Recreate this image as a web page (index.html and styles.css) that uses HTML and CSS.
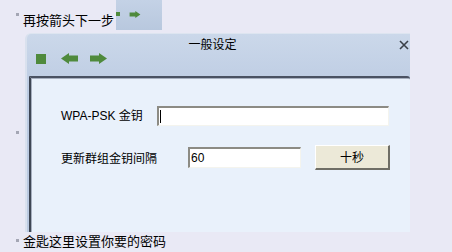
FILE: index.html
```html
<!DOCTYPE html>
<html lang="zh">
<head>
<meta charset="utf-8">
<link rel="stylesheet" href="styles.css">
</head>
<body>
<ul class="steps">
  <li class="step step-top">
    <span class="dot"></span>
    <span class="step-text">再按箭头下一步</span>
    <div class="strip">
      <span class="strip-square"></span>
      <svg class="strip-arrow" width="12" height="7" viewBox="0 0 17 11"><polygon points="17,5.5 9,0 9,2.5 0,2.5 0,8.5 9,8.5 9,11" fill="#4f8a3c"/></svg>
    </div>
  </li>
  <li class="step step-dialog">
    <span class="dot"></span>
    <div class="dialog">
      <div class="titlebar">
        <div class="title-row">
          <span class="title">一般设定</span>
          <svg class="close" width="10" height="10" viewBox="0 0 10 10"><path d="M1 1 L9 9 M9 1 L1 9" stroke="#3a4048" stroke-width="1.6"/></svg>
        </div>
        <div class="toolbar">
          <span class="tb-square"></span>
          <svg class="tb-arrow" width="17" height="11" viewBox="0 0 17 11"><polygon points="0,5.5 8,0 8,2.5 17,2.5 17,8.5 8,8.5 8,11" fill="#4f8a3c"/></svg>
          <svg class="tb-arrow" width="17" height="11" viewBox="0 0 17 11"><polygon points="17,5.5 9,0 9,2.5 0,2.5 0,8.5 9,8.5 9,11" fill="#4f8a3c"/></svg>
        </div>
      </div>
      <div class="panel">
        <div class="form-row row-key">
          <span class="label label-key">WPA-PSK 金钥</span>
          <div class="field field-key"><span class="caret"></span></div>
        </div>
        <div class="form-row row-interval">
          <span class="label label-interval">更新群组金钥间隔</span>
          <div class="field field-interval">60</div>
          <div class="button">十秒</div>
        </div>
      </div>
    </div>
  </li>
  <li class="step step-bottom">
    <span class="dot"></span>
    <span class="step-text">金匙这里设置你要的密码</span>
  </li>
</ul>
</body>
</html>
```
FILE: styles.css
```css
html, body {
  margin: 0;
  padding: 0;
}
body {
  width: 452px;
  height: 252px;
  overflow: hidden;
  background: #e9e9f5;
  font-family: "Noto Sans CJK SC", "DejaVu Sans", sans-serif;
  color: #000;
}
.steps {
  list-style: none;
  margin: 0;
  padding: 0 0 0 16px;
}
.step {
  display: flex;
}
.dot {
  width: 3px;
  height: 3px;
  background: #a4a6b4;
  flex: none;
}
.step-text {
  font-size: 13px;
  line-height: 16px;
  margin-left: 4px;
  white-space: nowrap;
}
.step-top {
  height: 30px;
  align-items: flex-start;
}
.step-top .dot {
  margin-top: 13px;
}
.step-top .step-text {
  margin-top: 12px;
}
.strip {
  margin-left: 2px;
  width: 46px;
  height: 30px;
  background: linear-gradient(#c4d2e6, #b8c8de);
  display: flex;
  align-items: center;
  padding-bottom: 2px;
  box-sizing: border-box;
}
.strip-square {
  width: 4px;
  height: 4px;
  background: #4f8a3c;
}
.strip-arrow {
  margin-left: 9px;
}
.step-dialog {
  margin-top: 3px;
  align-items: center;
}
.dialog {
  margin-left: 6px;
  width: 385px;
  height: 199px;
  display: flex;
  flex-direction: column;
  background: linear-gradient(#cbd8ea, #bccbe2 30%, #bac9e0);
  border-left: 2px solid #d9e1ee;
  border-top: 1px solid #dde5f0;
  border-radius: 6px 0 0 0;
  box-sizing: border-box;
}
.titlebar {
  height: 42px;
  flex: none;
}
.title-row {
  position: relative;
  height: 15px;
  margin-top: 2px;
  display: flex;
  justify-content: center;
}
.title {
  font-size: 12px;
  line-height: 15px;
  margin-left: -12px;
}
.close {
  position: absolute;
  right: 1px;
  top: 4px;
}
.toolbar {
  display: flex;
  align-items: center;
  margin-top: 1px;
  padding-left: 9px;
  height: 13px;
}
.tb-square {
  width: 10px;
  height: 10px;
  background: #4f8a3c;
}
.tb-arrow {
  margin-left: 15px;
}
.tb-arrow + .tb-arrow {
  margin-left: 12px;
}
.panel {
  flex: 1;
  margin-left: 2px;
  background: #e9f1fb;
  border-top: 2px solid #4a5262;
  border-left: 2px solid #3e4654;
  border-top-right-radius: 3px;
  box-shadow: inset 1px 1px 0 #a6afbf;
  padding: 28px 0 0 30px;
  display: flex;
  flex-direction: column;
  gap: 19px;
}
.form-row {
  display: flex;
  align-items: center;
}
.label {
  font-size: 12px;
  line-height: 16px;
  flex: none;
  white-space: nowrap;
}
.label-key {
  width: 96px;
  font-family: "Liberation Sans", "Noto Sans CJK SC", sans-serif;
  font-size: 12px;
}
.label-interval {
  width: 127px;
}
.field {
  box-sizing: border-box;
  background: #fff;
  border-style: solid;
  border-width: 2px 1px 1px 2px;
  border-color: #8c8b84 #f4f4ee #f4f4ee #8c8b84;
  font-family: "Liberation Sans", sans-serif;
  font-size: 12px;
  line-height: 16px;
  padding-left: 1px;
  display: flex;
  align-items: center;
}
.field-key {
  width: 232px;
  height: 20px;
}
.caret {
  width: 1px;
  height: 13px;
  background: #000;
}
.field-interval {
  width: 113px;
  height: 21px;
}
.button {
  box-sizing: border-box;
  margin-left: 14px;
  width: 75px;
  height: 25px;
  background: #ece9d8;
  border-style: solid;
  border-width: 1px 2px 2px 1px;
  border-color: #fff #6f6e66 #6f6e66 #fff;
  font-size: 12px;
  line-height: 21px;
  text-align: center;
}
.step-bottom {
  align-items: center;
  height: 17px;
}
```
